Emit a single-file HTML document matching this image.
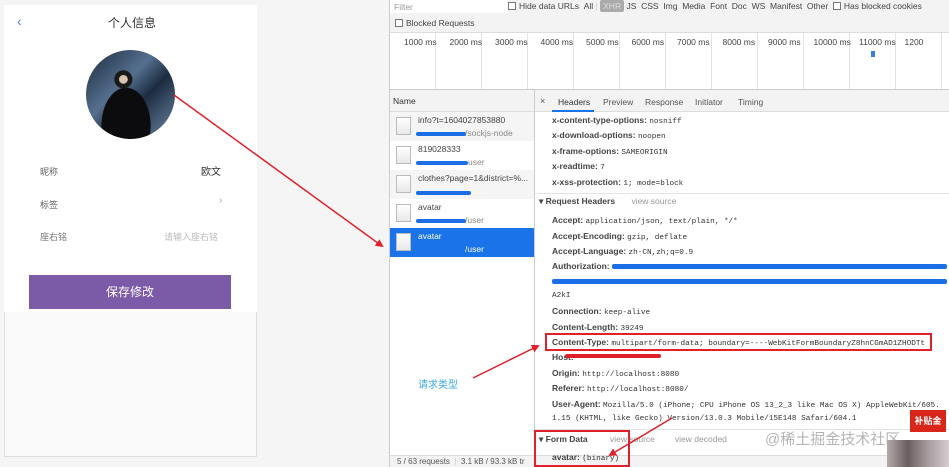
<!DOCTYPE html>
<html><head><meta charset="utf-8"><style>
*{margin:0;padding:0;box-sizing:border-box}
body{width:949px;height:467px;overflow:hidden;background:#f5f5f5;font-family:"Liberation Sans","Noto Sans CJK SC",sans-serif;position:relative;color:#333}
.a{position:absolute;white-space:nowrap}
.k{font-weight:bold;color:#444;font-size:8.5px}
.v{font-family:"Liberation Mono",monospace;font-size:7.7px;color:#333;font-weight:normal}
.ln{position:absolute;left:552px;line-height:12px;white-space:nowrap}
.cb{display:inline-block;width:8px;height:8px;border:1px solid #777;vertical-align:-1px;margin-right:3px;background:#fff}
.row{position:absolute;left:390px;width:144px;height:29px;font-size:8.5px;color:#444}
.ic{position:absolute;left:6px;top:5px;width:15px;height:18px;border:1px solid #bbb;background:linear-gradient(#fff,#e8e8e8)}
.t1{position:absolute;left:28px;top:3px;white-space:nowrap}
.t2{position:absolute;left:28px;top:16px;color:#888}
.blue{position:absolute;height:4px;background:#1a6fe6;border-radius:2px}
</style></head><body>
<div class="a" style="left:4px;top:5px;width:253px;height:452px;background:#f9f9f9;border:1px solid #ddd"></div>
<div class="a" style="left:4px;top:5px;width:253px;height:307px;background:#fff"></div>
<div class="a" style="left:17px;top:13px;font-size:14px;color:#4a7de0">‹</div>
<div class="a" style="left:108px;top:14px;font-size:12px;color:#333">个人信息</div>
<div class="a" style="left:86px;top:50px;width:89px;height:89px;border-radius:50%;background:radial-gradient(circle at 42% 33%,#d9c4b3 0 5%,#1a1a1a 6% 11%,transparent 12%),radial-gradient(ellipse at 45% 85%,#0c0c0e 0 35%,transparent 36%),linear-gradient(135deg,#1b2a3c,#55708f 40%,#1c2c40 60%,#6f8aa8)"></div>
<div class="a" style="left:40px;top:165px;font-size:9px;color:#666">昵称</div>
<div class="a" style="left:201px;top:163px;font-size:10px;color:#333">欧文</div>
<div class="a" style="left:40px;top:198px;font-size:9px;color:#666">标签</div>
<div class="a" style="left:219px;top:195px;font-size:10px;color:#aaa">›</div>
<div class="a" style="left:40px;top:230px;font-size:9px;color:#777">座右铭</div>
<div class="a" style="left:164px;top:230px;font-size:9px;color:#bbb">请输入座右铭</div>
<div class="a" style="left:29px;top:275px;width:202px;height:34px;background:#7b5aa8;color:#fff;font-size:12px;text-align:center;line-height:34px">保存修改</div>

<div class="a" style="left:389px;top:0;width:560px;height:467px;background:#fff;border-left:1px solid #ccc"></div>
<div class="a" style="left:390px;top:0;width:559px;height:32px;background:#f3f3f3"></div>
<div class="a" style="left:390px;top:0;width:118px;height:13px;background:#fff"></div>
<div class="a" style="left:394px;top:2px;font-size:8.5px;color:#999">Filter</div>
<div class="a" style="left:508px;top:1px;font-size:8.5px;color:#444"><span class="cb"></span>Hide data URLs &nbsp;All <span style="color:#ccc">|</span> <span style="background:#aaa;color:#ddd;padding:1px 3px;border-radius:2px">XHR</span> JS &nbsp;CSS &nbsp;Img &nbsp;Media &nbsp;Font &nbsp;Doc &nbsp;WS &nbsp;Manifest &nbsp;Other &nbsp;<span class="cb"></span>Has blocked cookies</div>
<div class="a" style="left:395px;top:18px;font-size:8.5px;color:#444"><span class="cb"></span>Blocked Requests</div>
<div class="a" style="left:390px;top:32px;width:559px;height:58px;background:#fff;border-top:1px solid #ddd;border-bottom:1px solid #ccc"></div>
<div class="a" style="left:390px;top:33px;width:559px;height:56px;background:repeating-linear-gradient(90deg,transparent 0 45px,#e4e4e4 45px 46px)"></div>
<div class="a" style="left:404px;top:37px;font-size:8.5px;color:#444;word-spacing:0">
<span style="display:inline-block;width:45.5px">1000 ms</span><span style="display:inline-block;width:45.5px">2000 ms</span><span style="display:inline-block;width:45.5px">3000 ms</span><span style="display:inline-block;width:45.5px">4000 ms</span><span style="display:inline-block;width:45.5px">5000 ms</span><span style="display:inline-block;width:45.5px">6000 ms</span><span style="display:inline-block;width:45.5px">7000 ms</span><span style="display:inline-block;width:45.5px">8000 ms</span><span style="display:inline-block;width:45.5px">9000 ms</span><span style="display:inline-block;width:45.5px">10000 ms</span><span style="display:inline-block;width:45.5px">11000 ms</span>1200</div>
<div class="a" style="left:871px;top:51px;width:4px;height:6px;background:#3a7de0"></div>

<div class="a" style="left:390px;top:90px;width:144px;height:22px;background:#f3f3f3;border-bottom:1px solid #ddd;font-size:8.5px;color:#333;padding:6px 0 0 3px">Name</div>
<div class="a" style="left:534px;top:90px;width:1px;height:365px;background:#ccc"></div>
<div class="row" style="top:112px;background:#f5f5f5"><div class="ic"></div><div class="t1">info?t=1604027853880</div><div class="t2" style="left:75px">/sockjs-node</div><div class="blue" style="left:26px;top:20px;width:50px"></div></div>
<div class="row" style="top:141px;background:#fff"><div class="ic"></div><div class="t1">819028333</div><div class="t2" style="left:78px">user</div><div class="blue" style="left:26px;top:20px;width:52px"></div></div>
<div class="row" style="top:170px;background:#f5f5f5"><div class="ic"></div><div class="t1">clothes?page=1&amp;district=%...</div><div class="blue" style="left:26px;top:21px;width:55px"></div></div>
<div class="row" style="top:199px;background:#fff"><div class="ic"></div><div class="t1">avatar</div><div class="t2" style="left:75px">/user</div><div class="blue" style="left:26px;top:20px;width:50px"></div></div>
<div class="row" style="top:228px;background:#1a73e8;color:#fff"><div class="ic"></div><div class="t1">avatar</div><div class="t2" style="left:75px;color:#fff">/user</div></div>
<div class="a" style="left:390px;top:455px;width:559px;height:12px;background:#f3f3f3;border-top:1px solid #ddd;font-size:8px;color:#555;padding:1px 0 0 7px">5 / 63 requests &nbsp;<span style="color:#ccc">|</span>&nbsp; 3.1 kB / 93.3 kB tr</div>

<div class="a" style="left:535px;top:90px;width:414px;height:22px;background:#f3f3f3;border-bottom:1px solid #ddd"></div>
<div class="a" style="left:540px;top:96px;font-size:9px;color:#555">×</div>
<div class="a" style="left:558px;top:97px;font-size:8.5px;color:#333">Headers</div>
<div class="a" style="left:552px;top:110px;width:42px;height:2px;background:#1a73e8"></div>
<div class="a" style="left:603px;top:97px;font-size:8.5px;color:#555">Preview</div>
<div class="a" style="left:645px;top:97px;font-size:8.5px;color:#555">Response</div>
<div class="a" style="left:695px;top:97px;font-size:8.5px;color:#555">Initiator</div>
<div class="a" style="left:738px;top:97px;font-size:8.5px;color:#555">Timing</div>

<div class="ln k" style="top:114px">x-content-type-options: <span class="v">nosniff</span></div>
<div class="ln k" style="top:129px">x-download-options: <span class="v">noopen</span></div>
<div class="ln k" style="top:145px">x-frame-options: <span class="v">SAMEORIGIN</span></div>
<div class="ln k" style="top:160px">x-readtime: <span class="v">7</span></div>
<div class="ln k" style="top:176px">x-xss-protection: <span class="v">1; mode=block</span></div>
<div class="a" style="left:535px;top:193px;width:414px;height:1px;background:#e4e4e4"></div>
<div class="a k" style="left:539px;top:196px">▾ Request Headers <span style="font-weight:normal;color:#999;margin-left:14px">view source</span></div>
<div class="ln k" style="top:214px">Accept: <span class="v">application/json, text/plain, */*</span></div>
<div class="ln k" style="top:230px">Accept-Encoding: <span class="v">gzip, deflate</span></div>
<div class="ln k" style="top:245px">Accept-Language: <span class="v">zh-CN,zh;q=0.9</span></div>
<div class="ln k" style="top:260px">Authorization:</div>
<div class="blue" style="left:612px;top:264px;width:335px;height:5px"></div>
<div class="blue" style="left:552px;top:279px;width:395px;height:5px"></div>
<div class="ln v" style="top:290px">A2kI</div>
<div class="ln k" style="top:305px">Connection: <span class="v">keep-alive</span></div>
<div class="ln k" style="top:321px">Content-Length: <span class="v">39249</span></div>
<div class="ln k" style="top:336px">Content-Type: <span class="v">multipart/form-data; boundary=----WebKitFormBoundaryZ8hnCGmAD1ZHODTt</span></div>
<div class="a" style="left:545px;top:333px;width:387px;height:18px;border:2px solid #e0202a"></div>
<div class="ln k" style="top:351px">Host:</div>
<div class="a" style="left:565px;top:354px;width:96px;height:4px;background:#e0202a;border-radius:2px"></div>
<div class="ln k" style="top:367px">Origin: <span class="v">http://localhost:8080</span></div>
<div class="ln k" style="top:382px">Referer: <span class="v">http://localhost:8080/</span></div>
<div class="ln k" style="top:398px">User-Agent: <span class="v">Mozilla/5.0 (iPhone; CPU iPhone OS 13_2_3 like Mac OS X) AppleWebKit/605.</span></div>
<div class="ln v" style="top:413px">1.15 (KHTML, like Gecko) Version/13.0.3 Mobile/15E148 Safari/604.1</div>
<div class="a" style="left:535px;top:429px;width:414px;height:1px;background:#e4e4e4"></div>
<div class="a k" style="left:539px;top:434px">▾ Form Data <span style="font-weight:normal;color:#999;margin-left:20px">view source</span><span style="font-weight:normal;color:#999;margin-left:20px">view decoded</span></div>
<div class="ln k" style="top:451px">avatar: <span class="v">(binary)</span></div>
<div class="a" style="left:534px;top:430px;width:96px;height:37px;border:2px solid #e0202a"></div>

<div class="a" style="left:418px;top:376px;font-size:10px;color:#3fa9e0">请求类型</div>
<div class="a" style="left:910px;top:410px;width:36px;height:22px;background:#d8261b;color:#fff;font-size:9px;font-weight:bold;text-align:center;line-height:22px">补贴金</div>
<div class="a" style="left:765px;top:428px;font-size:15px;color:rgba(120,120,120,.55)">@稀土掘金技术社区</div>
<div class="a" style="left:887px;top:440px;width:62px;height:27px;background:linear-gradient(90deg,#b5aaa9,#6b5e60,#a89c9f,#d5cdd0)"></div>

<svg class="a" style="left:0;top:0" width="949" height="467">
<defs><marker id="m" markerWidth="8" markerHeight="8" refX="6" refY="4" orient="auto" markerUnits="userSpaceOnUse"><path d="M0,0 L8,4 L0,8 z" fill="#e0202a"/></marker></defs>
<line x1="174" y1="95" x2="382" y2="246" stroke="#e0202a" stroke-width="1.5" marker-end="url(#m)"/>
<line x1="473" y1="378" x2="538" y2="346" stroke="#e0202a" stroke-width="1.5" marker-end="url(#m)"/>
<line x1="672" y1="418" x2="610" y2="455" stroke="#e0202a" stroke-width="1.5" marker-end="url(#m)"/>
</svg>
</body></html>
